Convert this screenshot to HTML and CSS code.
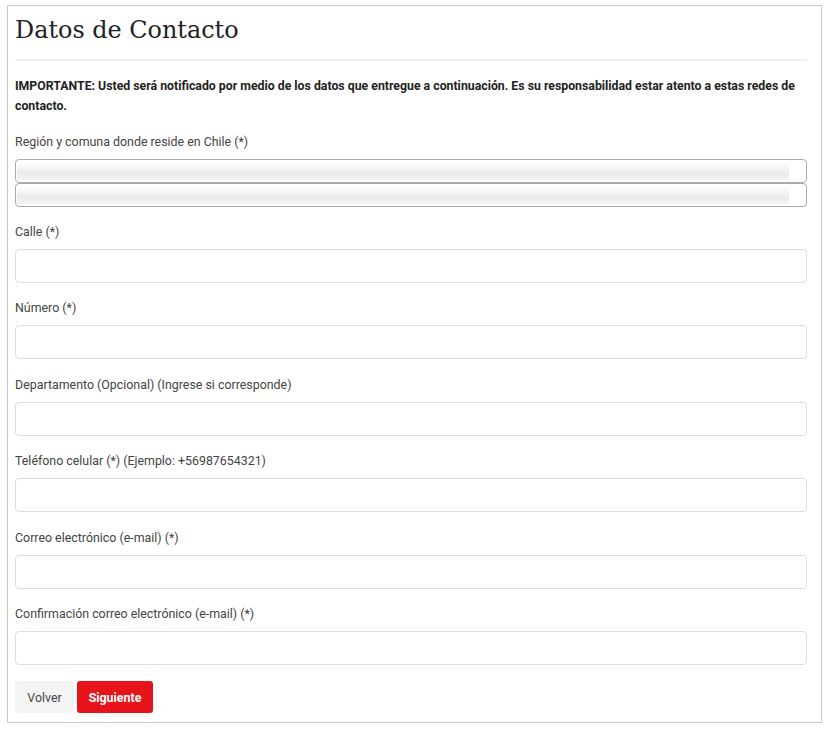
FILE: index.html
```html
<!DOCTYPE html>
<html lang="es">
<head>
<meta charset="utf-8">
<title>Datos de Contacto</title>
<link rel="stylesheet" href="styles.css">
</head>
<body>
<div class="panel">
  <h1 class="title">Datos de Contacto</h1>
  <hr class="rule">
  <p class="notice">IMPORTANTE: Usted será notificado por medio de los datos que entregue a continuación. Es su responsabilidad estar atento a estas redes de contacto.</p>

  <div class="group group-region">
    <label class="label">Región y comuna donde reside en Chile (*)</label>
    <div class="select"><div class="select-bar"></div></div>
    <div class="select"><div class="select-bar"></div></div>
  </div>

  <div class="group">
    <label class="label">Calle (*)</label>
    <input class="input" type="text">
  </div>
  <div class="group">
    <label class="label">Número (*)</label>
    <input class="input" type="text">
  </div>
  <div class="group">
    <label class="label">Departamento (Opcional) (Ingrese si corresponde)</label>
    <input class="input" type="text">
  </div>
  <div class="group">
    <label class="label">Teléfono celular (*) (Ejemplo: +56987654321)</label>
    <input class="input" type="text">
  </div>
  <div class="group">
    <label class="label">Correo electrónico (e-mail) (*)</label>
    <input class="input" type="text">
  </div>
  <div class="group">
    <label class="label">Confirmación correo electrónico (e-mail) (*)</label>
    <input class="input" type="text">
  </div>

  <div class="actions">
    <button class="btn btn-back" type="button">Volver</button>
    <button class="btn btn-next" type="button">Siguiente</button>
  </div>
</div>
</body>
</html>
```
FILE: styles.css
```css
* { box-sizing: border-box; }
html, body { margin: 0; padding: 0; background: #fff; }
body {
  font-family: Roboto, "Liberation Sans", Arial, sans-serif;
  font-size: 12.4px;
  color: #333;
  padding: 5px 0 0 7px;
}
.panel {
  width: 815px;
  height: 718px;
  border: 1px solid #c9c9c9;
  padding: 0 14px 0 7px;
}
.title {
  font-family: "DejaVu Serif", "Liberation Serif", serif;
  font-weight: normal;
  font-size: 23.9px;
  color: #222;
  margin: 9px 0 0 0;
  line-height: 30px;
}
.rule {
  border: 0;
  border-top: 2px solid #f0f0f0;
  margin: 14px 0 0 0;
}
.notice {
  font-weight: bold;
  font-size: 12.3px;
  color: #222;
  line-height: 19.5px;
  margin: 16px 0 0 0;
}
.group { margin-bottom: 16.4px; }
.group-region { margin-top: 17px; margin-bottom: 16px; }
.label {
  display: block;
  line-height: 17px;
  margin-bottom: 9px;
  color: #444;
}
.select {
  height: 24px;
  border: 1px solid #aaa;
  border-radius: 4px;
  padding: 2px 17px 2px 1px;
  background: #fff;
}
.select-bar {
  height: 18px;
  background: linear-gradient(to bottom, #fff 0%, #f6f6f6 30%, #eaeaea 60%, #f3f3f3 100%);
}
.input {
  display: block;
  width: 100%;
  height: 34px;
  border: 1px solid #ddd;
  border-radius: 4px;
  background: #fff;
  margin: 0;
  padding: 0 10px;
  font: inherit;
}
.actions {
  display: flex;
  gap: 3px;
}
.btn {
  height: 32px;
  border: 0;
  border-radius: 3px;
  font-family: Roboto, "Liberation Sans", Arial, sans-serif;
  font-size: 12.4px;
  padding: 0;
}
.btn-back { background: #f4f4f4; color: #444; width: 59px; }
.btn-next { background: #e8141b; color: #fff; font-weight: bold; width: 76px; }
```
